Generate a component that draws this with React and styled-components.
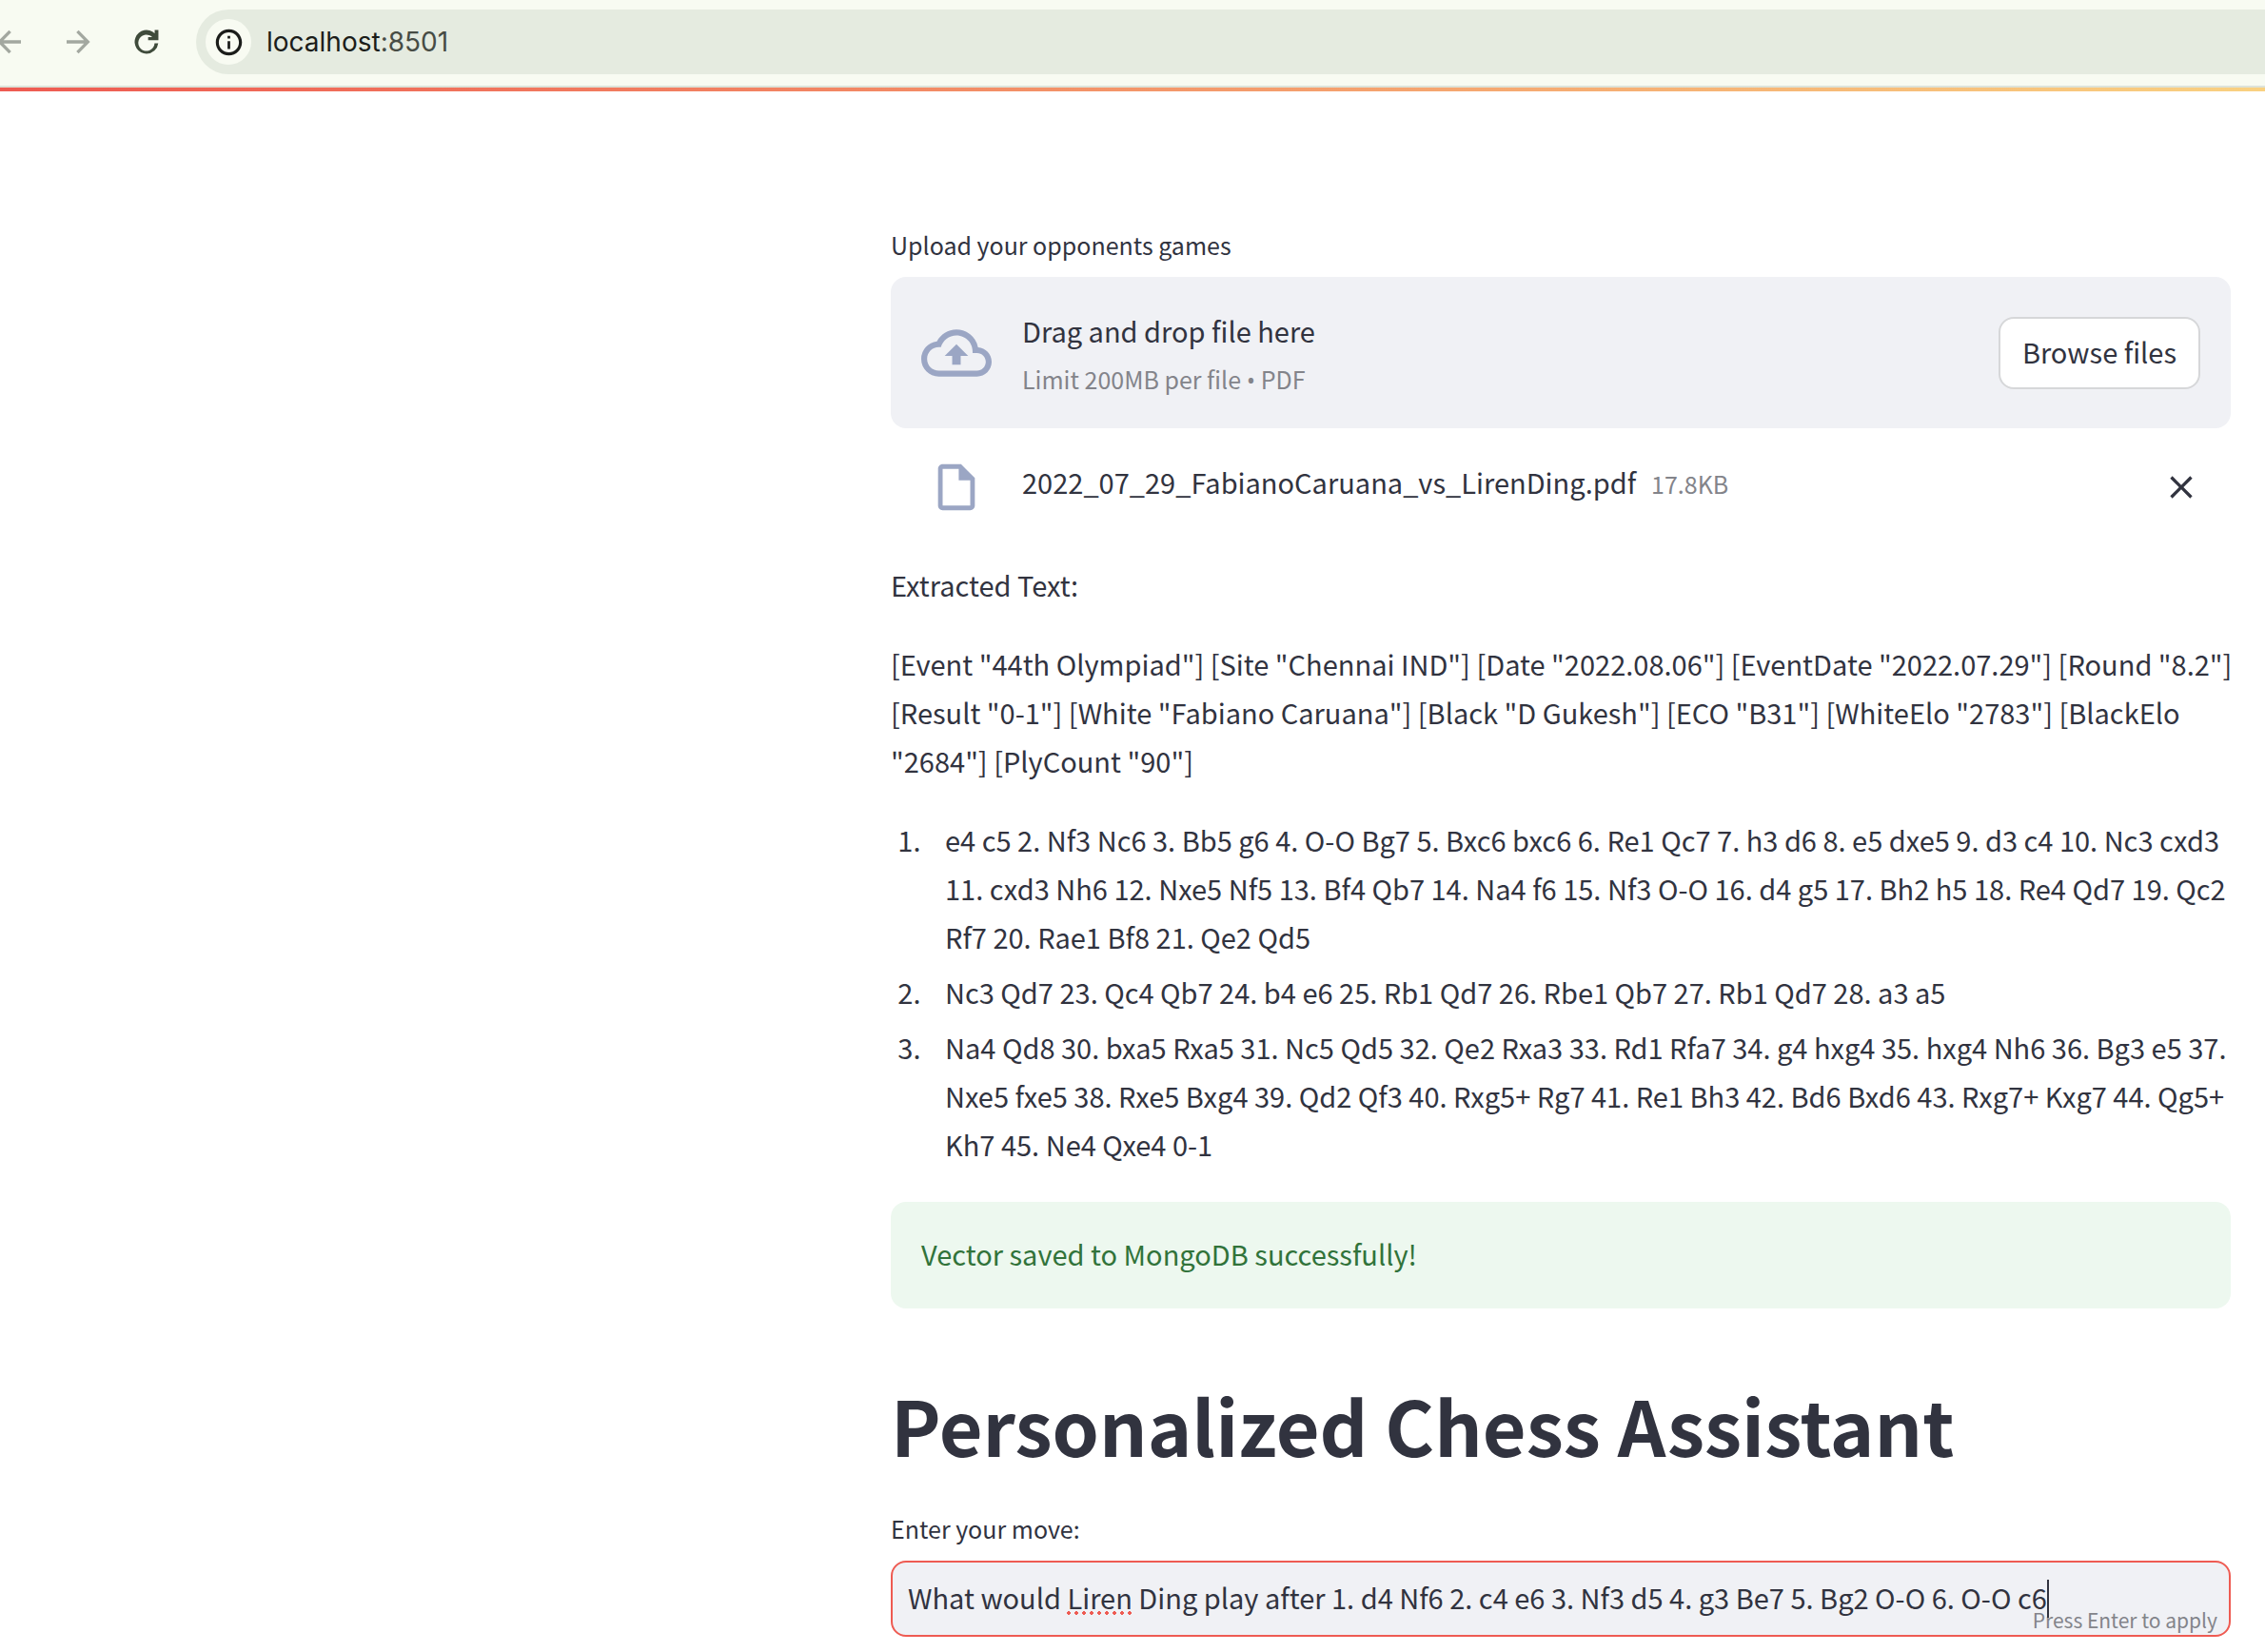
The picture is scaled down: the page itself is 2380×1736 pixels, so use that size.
import React, { useState } from "react";
import styled, { createGlobalStyle } from "styled-components";

const ink = "#31333f";
const muted = "#83848a";
const surface = "#f0f1f5";
const slate = "#9ba6c4";
const coral = "#ee5b52";

const GlobalStyle = createGlobalStyle`
  * { box-sizing: border-box; }
  body {
    margin: 0;
    background: #fff;
    color: ${ink};
    font-family: "Noto Sans CJK SC", "Noto Sans", sans-serif;
    font-size: 29px;
    line-height: 51px;
  }
  button, input { font: inherit; color: inherit; }
`;

const Toolbar = styled.header`
  display: flex;
  align-items: center;
  gap: 34px;
  height: 92px;
  padding: 10px 0 12px;
  background: #f8fbf2;
  border-bottom: 2px solid #dde3d9;
  overflow: hidden;
`;

const NavButtons = styled.nav`
  display: flex;
  gap: 36px;
  margin-left: -8px;
`;

const IconButton = styled.button`
  display: flex;
  padding: 0;
  border: 0;
  background: none;
  color: ${(p) => p.$tone || ink};
  cursor: pointer;
`;

const IconTint = styled.span`
  display: flex;
  justify-content: center;
  width: 74px;
  color: ${slate};
`;

const AddressBar = styled.div`
  display: flex;
  flex: 1;
  align-items: center;
  gap: 16px;
  height: 68px;
  padding-left: 10px;
  border-radius: 34px 0 0 34px;
  background: #e5ebe0;
`;

const SiteInfo = styled.span`
  display: grid;
  place-items: center;
  width: 48px;
  height: 48px;
  border-radius: 50%;
  background: #f8fbf2;
  color: #1b1d1a;
`;

const Url = styled.a`
  color: #1b1d1a;
  font-family: Inter, Roboto, sans-serif;
  font-size: 28px;
  line-height: 32px;
  text-decoration: none;
`;

const Port = styled.span`
  color: #474c45;
`;

const Decoration = styled.div`
  height: 4px;
  background: linear-gradient(90deg, #ee5b52, #f9d181);
`;

const Main = styled.main`
  display: flex;
  flex-direction: column;
  max-width: 1444px;
  margin-left: auto;
  padding: 141px 36px 12px 0;
`;

const FieldLabel = styled.label`
  font-size: 25px;
  line-height: 40px;
  margin-bottom: 14px;
`;

const Dropzone = styled.section`
  display: flex;
  align-items: center;
  gap: 32px;
  padding: 25px 32px;
  border-radius: 16px;
  background: ${surface};
`;

const DropText = styled.div`
  display: flex;
  flex: 1;
  flex-direction: column;
  padding-top: 6px;
`;

const Small = styled.span`
  color: ${muted};
  font-size: 25px;
`;

const Bullet = styled.span`
  font-family: "Open Sans", "Noto Sans", sans-serif;
`;

const BrowseButton = styled.button`
  height: 76px;
  padding: 0 23px 4px;
  border: 2px solid #d6d7d9;
  border-radius: 16px;
  background: #fff;
  line-height: 48px;
  cursor: pointer;
`;

const FileRow = styled.div`
  display: flex;
  align-items: center;
  gap: 32px;
  padding: 33px 32px 0;
`;

const FileMeta = styled.div`
  display: flex;
  flex: 1;
  align-self: flex-start;
  align-items: baseline;
  gap: 16px;
  line-height: 46px;
`;

const Extracted = styled.section`
  display: flex;
  flex-direction: column;
  gap: 32px;
  padding: 48px 0 35px;
`;

const Paragraph = styled.p`
  margin: 0;
`;

const Line = styled.span`
  display: block;
  white-space: nowrap;
`;

const Moves = styled.ol`
  display: flex;
  flex-direction: column;
  gap: 7px;
  margin: 0;
  padding: 0 0 0 38px;
`;

const Move = styled.li`
  padding-left: 19px;
`;

const Success = styled.div`
  padding: 30px 32px 34px;
  border-radius: 16px;
  background: #edf8ef;
  color: #31733a;
  line-height: 48px;
`;

const Title = styled.h1`
  margin: 0;
  padding: 69px 0 36px;
  font-size: 79px;
  font-weight: 700;
  line-height: 106px;
`;

const InputWrap = styled.div`
  position: relative;
`;

const TextInput = styled.input`
  display: block;
  width: 100%;
  height: 80px;
  padding: 0 16px 4px;
  border: 2px solid ${coral};
  border-radius: 16px;
  outline: none;
  background: ${surface};
  caret-color: transparent;
`;

const SpellingMark = styled.span`
  position: absolute;
  left: 185px;
  top: 53px;
  width: 68px;
  height: 4px;
  background: radial-gradient(circle at 2px 2px, ${coral} 2px, transparent 2px) 0 0 / 8px 4px;
`;

const Caret = styled.span`
  position: absolute;
  left: 1215px;
  top: 20px;
  width: 2px;
  height: 40px;
  background: ${ink};
`;

const Hint = styled.span`
  position: absolute;
  right: 14px;
  bottom: 4px;
  color: ${muted};
  font-size: 21px;
  line-height: 28px;
`;

const Icon = ({ size, children }) => (
  <svg width={size} height={size} viewBox="0 0 24 24" fill="currentColor" aria-hidden="true">
    {children}
  </svg>
);

const headers = [
  '[Event "44th Olympiad"] [Site "Chennai IND"] [Date "2022.08.06"] [EventDate "2022.07.29"] [Round "8.2"]',
  '[Result "0-1"] [White "Fabiano Caruana"] [Black "D Gukesh"] [ECO "B31"] [WhiteElo "2783"] [BlackElo',
  '"2684"] [PlyCount "90"]',
];

const moves = [
  "e4 c5 2. Nf3 Nc6 3. Bb5 g6 4. O-O Bg7 5. Bxc6 bxc6 6. Re1 Qc7 7. h3 d6 8. e5 dxe5 9. d3 c4 10. Nc3 cxd3 11. cxd3 Nh6 12. Nxe5 Nf5 13. Bf4 Qb7 14. Na4 f6 15. Nf3 O-O 16. d4 g5 17. Bh2 h5 18. Re4 Qd7 19. Qc2 Rf7 20. Rae1 Bf8 21. Qe2 Qd5",
  "Nc3 Qd7 23. Qc4 Qb7 24. b4 e6 25. Rb1 Qd7 26. Rbe1 Qb7 27. Rb1 Qd7 28. a3 a5",
  "Na4 Qd8 30. bxa5 Rxa5 31. Nc5 Qd5 32. Qe2 Rxa3 33. Rd1 Rfa7 34. g4 hxg4 35. hxg4 Nh6 36. Bg3 e5 37. Nxe5 fxe5 38. Rxe5 Bxg4 39. Qd2 Qf3 40. Rxg5+ Rg7 41. Re1 Bh3 42. Bd6 Bxd6 43. Rxg7+ Kxg7 44. Qg5+ Kh7 45. Ne4 Qxe4 0-1",
];

export default function App() {
  const [move, setMove] = useState(
    "What would Liren Ding play after 1. d4 Nf6 2. c4 e6 3. Nf3 d5 4. g3 Be7 5. Bg2 O-O 6. O-O c6"
  );

  return (
    <>
      <GlobalStyle />
      <Toolbar>
        <NavButtons>
          <IconButton $tone="#a3a8a0" aria-label="Back">
            <Icon size={36}>
              <path d="M20 10.8H7.83l5.39-5.39L11.6 3.8 3.6 12l8 8.2 1.61-1.61L7.83 13.2H20v-2.4z" />
            </Icon>
          </IconButton>
          <IconButton $tone="#a3a8a0" aria-label="Forward">
            <Icon size={36}>
              <path d="M4 10.8h12.17l-5.39-5.39L12.4 3.8l8 8.2-8 8.2-1.61-1.61 5.38-5.39H4v-2.4z" />
            </Icon>
          </IconButton>
          <IconButton $tone="#3f4b3b" aria-label="Reload">
            <Icon size={36}>
              <path d="M12 20.3a8.3 8.3 0 1 1 5.7-14.3V3.7h2.6v7.1h-7.2V8.7h2.9A5.7 5.7 0 1 0 17.6 13h2.6a8.3 8.3 0 0 1-8.2 7.3z" />
            </Icon>
          </IconButton>
        </NavButtons>
        <AddressBar>
          <SiteInfo>
            <Icon size={33}>
              <path d="M11 17h2v-6h-2v6zm1-15C6.48 2 2 6.48 2 12s4.48 10 10 10 10-4.48 10-10S17.52 2 12 2zm0 17.7c-4.2 0-7.7-3.4-7.7-7.7s3.5-7.7 7.7-7.7 7.7 3.4 7.7 7.7-3.5 7.7-7.7 7.7zM11 9h2V7h-2v2z" />
            </Icon>
          </SiteInfo>
          <Url href="#top">
            localhost<Port>:8501</Port>
          </Url>
        </AddressBar>
      </Toolbar>
      <Decoration />
      <Main id="top">
        <FieldLabel as="div">Upload your opponents games</FieldLabel>
        <Dropzone aria-label="Upload your opponents games">
          <IconTint>
            <Icon size={74}>
              <path d="M19.35 10.04A7.49 7.49 0 0 0 12 4C9.11 4 6.6 5.64 5.35 8.04A5.994 5.994 0 0 0 0 14c0 3.31 2.69 6 6 6h13c2.76 0 5-2.24 5-5 0-2.64-2.05-4.78-4.65-4.96zM19 18H6c-2.21 0-4-1.79-4-4s1.79-4 4-4h.71C7.37 7.69 9.48 6 12 6c3.04 0 5.5 2.46 5.5 5.5v.5H19c1.66 0 3 1.34 3 3s-1.34 3-3 3zM8 13h2.55v3h2.9v-3H16l-4-4-4 4z" />
            </Icon>
          </IconTint>
          <DropText>
            <span>Drag and drop file here</span>
            <Small>
              Limit 200MB per file <Bullet>•</Bullet> PDF
            </Small>
          </DropText>
          <BrowseButton>Browse files</BrowseButton>
        </Dropzone>
        <FileRow>
          <IconTint>
            <Icon size={58}>
              <path d="M14 2H6c-1.1 0-1.99.9-1.99 2L4 20c0 1.1.89 2 1.99 2H18c1.1 0 2-.9 2-2V8l-6-6zM6 20V4h7v5h5v11H6z" />
            </Icon>
          </IconTint>
          <FileMeta>
            <span>2022_07_29_FabianoCaruana_vs_LirenDing.pdf</span>
            <Small>17.8KB</Small>
          </FileMeta>
          <IconButton aria-label="Remove file">
            <Icon size={40}>
              <path d="M19 6.41L17.59 5 12 10.59 6.41 5 5 6.41 10.59 12 5 17.59 6.41 19 12 13.41 17.59 19 19 17.59 13.41 12z" />
            </Icon>
          </IconButton>
        </FileRow>
        <Extracted>
          <Paragraph>Extracted Text:</Paragraph>
          <Paragraph>
            {headers.map((h) => (
              <Line key={h}>{h}</Line>
            ))}
          </Paragraph>
          <Moves>
            {moves.map((m) => (
              <Move key={m}>{m}</Move>
            ))}
          </Moves>
        </Extracted>
        <Success role="status">Vector saved to MongoDB successfully!</Success>
        <Title>Personalized Chess Assistant</Title>
        <FieldLabel htmlFor="move">Enter your move:</FieldLabel>
        <InputWrap>
          <TextInput id="move" value={move} onChange={(e) => setMove(e.target.value)} />
          <SpellingMark />
          <Hint>Press Enter to apply</Hint>
          <Caret />
        </InputWrap>
      </Main>
    </>
  );
}
